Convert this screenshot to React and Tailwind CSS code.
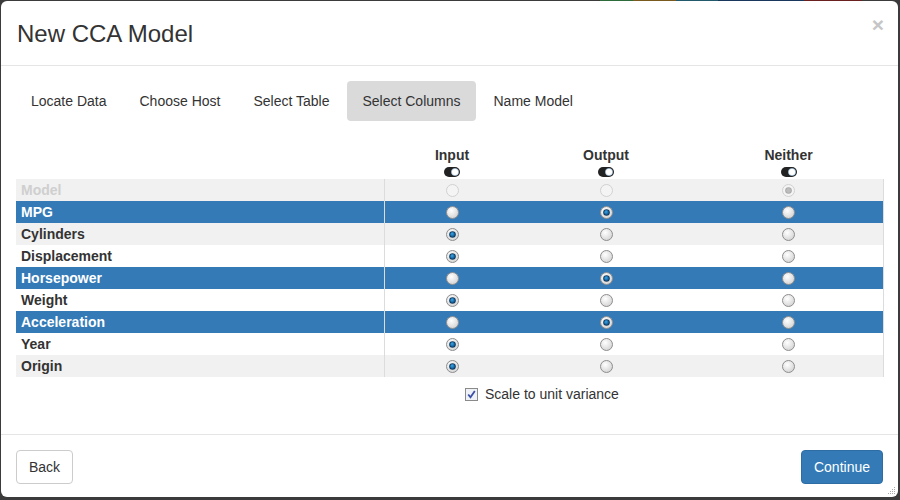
import React from 'react';

const tabs = ['Locate Data', 'Choose Host', 'Select Table', 'Select Columns', 'Name Model'];

const rows = [
  { name: 'Model', pick: 'neither', disabled: true },
  { name: 'MPG', pick: 'output' },
  { name: 'Cylinders', pick: 'input' },
  { name: 'Displacement', pick: 'input' },
  { name: 'Horsepower', pick: 'output' },
  { name: 'Weight', pick: 'input' },
  { name: 'Acceleration', pick: 'output' },
  { name: 'Year', pick: 'input' },
  { name: 'Origin', pick: 'input' },
];

function Radio({ checked, disabled }) {
  return (
    <svg width="13" height="13" viewBox="0 0 13 13">
      <defs>
        <radialGradient id="rfill" cx="0.4" cy="0.35" r="0.7">
          <stop offset="0" stopColor="#ffffff" />
          <stop offset="1" stopColor="#d2d2d2" />
        </radialGradient>
        <radialGradient id="rdot" cx="0.4" cy="0.35" r="0.7">
          <stop offset="0" stopColor="#3aa6e8" />
          <stop offset="1" stopColor="#0a4f8a" />
        </radialGradient>
      </defs>
      <circle cx="6.5" cy="6.5" r="6" fill={disabled ? '#f4f4f4' : 'url(#rfill)'} stroke={disabled ? '#d0d0d0' : '#8e8e8e'} strokeWidth="1" />
      {checked && (
        <>
          <circle cx="6.5" cy="6.5" r="3.3" fill={disabled ? '#a8a8a8' : '#123a5c'} />
          <circle cx="6.5" cy="6.5" r="2.4" fill={disabled ? '#bcbcbc' : 'url(#rdot)'} />
        </>
      )}
    </svg>
  );
}

function Toggle() {
  return (
    <svg width="16" height="10" viewBox="0 0 16 10">
      <rect x="0" y="0" width="16" height="10" rx="5" fill="#222" />
      <circle cx="11" cy="5" r="3.6" fill="#fff" stroke="#9cc4e8" strokeWidth="0.6" />
    </svg>
  );
}

export default function App() {
  return (
    <div className="w-[900px] h-[500px] bg-[#3b3b3b] overflow-hidden relative" style={{ fontFamily: '"Liberation Sans", Arial, sans-serif' }}>
      <div className="flex h-[1px] w-full">
        <div className="w-[600px] bg-[#3b3b3b]" />
        <div className="w-[33px] bg-[#2e6b3a]" />
        <div className="w-[43px] bg-[#7a5a1e]" />
        <div className="w-[42px] bg-[#235a6b]" />
        <div className="w-[86px] bg-[#17375c]" />
        <div className="w-[58px] bg-[#6b2020]" />
      </div>
      <div className="relative ml-[1px] w-[897px] h-[496px] bg-white rounded-[6px] overflow-hidden text-[#333] flex flex-col">
        <div className="flex justify-between items-start h-[65px] border-b border-[#e5e5e5] pl-[16px] pr-[14px]">
          <h4 className="text-[24px] leading-[34px] pt-[16px] m-0 font-normal">New CCA Model</h4>
          <span className="text-[21px] font-bold leading-none text-[#c6c6c6] mt-[13px]">×</span>
        </div>

        <div className="px-[15px] pt-[15px] h-[368px]">
          <div className="flex gap-[3px]">
            {tabs.map((t) => (
              <div
                key={t}
                className={`px-[15px] h-[40px] leading-[40px] text-[14px] rounded-[4px] ${t === 'Select Columns' ? 'bg-[#dadada]' : ''}`}
              >
                {t}
              </div>
            ))}
          </div>

          <div className="mt-[24px] w-[868px]">
            <div className="grid grid-cols-[369px_134px_174px_191px] h-[34px]">
              <div />
              {['Input', 'Output', 'Neither'].map((h) => (
                <div key={h} className="flex flex-col items-center">
                  <span className="text-[14px] font-bold leading-[20px]">{h}</span>
                  <span className="h-[14px] flex items-center"><Toggle /></span>
                </div>
              ))}
            </div>
            {rows.map((r, i) => {
              const blue = ['MPG', 'Horsepower', 'Acceleration'].includes(r.name);
              const bg = blue ? 'bg-[#337ab7]' : i % 2 === 0 ? 'bg-[#f1f1f1]' : 'bg-white';
              const color = r.disabled ? 'text-[#cfcfcf]' : blue ? 'text-white' : 'text-[#333]';
              return (
                <div key={r.name} className={`grid grid-cols-[369px_134px_174px_191px] h-[22px] ${bg}`}>
                  <div className={`pl-[5px] text-[14px] font-bold leading-[22px] border-r border-[#dcdcdc] ${color}`}>{r.name}</div>
                  <div className="flex items-center justify-center"><Radio checked={r.pick === 'input'} disabled={r.disabled} /></div>
                  <div className="flex items-center justify-center"><Radio checked={r.pick === 'output'} disabled={r.disabled} /></div>
                  <div className="flex items-center justify-center border-r border-[#dcdcdc]"><Radio checked={r.pick === 'neither'} disabled={r.disabled} /></div>
                </div>
              );
            })}
            <div className="flex items-center h-[20px] mt-[7px] pl-[449px] gap-[7px]">
              <svg width="13" height="13" viewBox="0 0 13 13">
                <rect x="0.5" y="0.5" width="12" height="12" fill="#eef1f6" stroke="#8a8a8a" />
                <path d="M3.2 6.5 L5.5 9.2 L9.8 3" fill="none" stroke="#3b4fa8" strokeWidth="1.8" />
              </svg>
              <span className="text-[14px] leading-[20px]">Scale to unit variance</span>
            </div>
          </div>
        </div>

        <div className="border-t border-[#e5e5e5] px-[15px] pt-[15px] flex justify-between">
          <button className="h-[34px] px-[12px] border border-[#ccc] rounded-[4px] bg-white text-[14px] text-[#333]">Back</button>
          <button className="h-[34px] px-[12px] border border-[#2e6da4] rounded-[4px] bg-[#337ab7] text-[14px] text-white">Continue</button>
        </div>

        <svg className="absolute right-[2px] bottom-[2px]" width="9" height="9" viewBox="0 0 9 9">
          <rect x="7" y="1" width="1" height="1" fill="#aaa" />
          <rect x="5" y="3" width="1" height="1" fill="#aaa" />
          <rect x="7" y="3" width="1" height="1" fill="#aaa" />
          <rect x="3" y="5" width="1" height="1" fill="#aaa" />
          <rect x="5" y="5" width="1" height="1" fill="#aaa" />
          <rect x="7" y="5" width="1" height="1" fill="#aaa" />
          <rect x="1" y="7" width="1" height="1" fill="#aaa" />
          <rect x="3" y="7" width="1" height="1" fill="#aaa" />
          <rect x="5" y="7" width="1" height="1" fill="#aaa" />
          <rect x="7" y="7" width="1" height="1" fill="#aaa" />
        </svg>
      </div>
    </div>
  );
}
